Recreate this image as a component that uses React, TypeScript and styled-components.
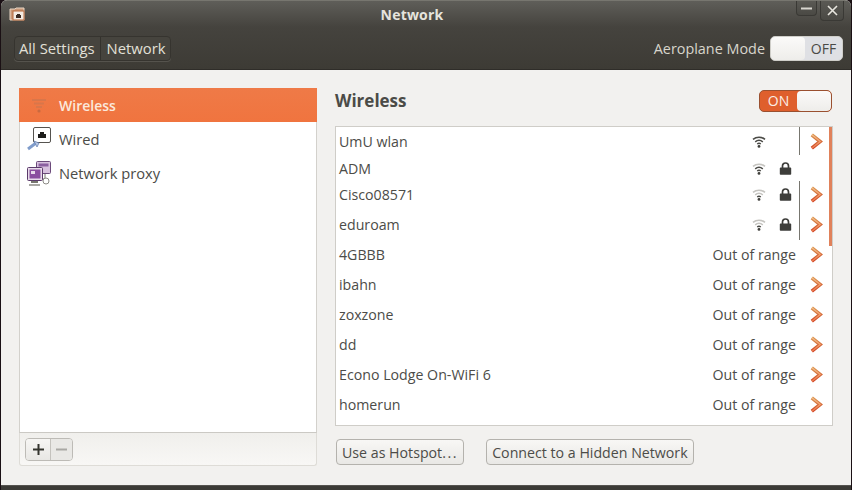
import React from "react";
import styled, { createGlobalStyle } from "styled-components";

const Global = createGlobalStyle`
  html, body { margin: 0; padding: 0; width: 852px; height: 490px; overflow: hidden; background: #1a1014; }
  * { box-sizing: border-box; }
  body { font-family: "Open Sans", "Noto Sans", sans-serif; }
`;

const Win = styled.div`
  width: 850px; height: 490px; margin-left: 1px; display: flex; flex-direction: column;
  border-radius: 6px 6px 0 0; overflow: hidden; background: #f2f1ef;
`;
const TitleBar = styled.div`
  height: 27px; flex: none; position: relative; display: flex; align-items: center; justify-content: center;
  padding-right: 28px;
  background: linear-gradient(#5f5e59, #45433e);
  border-top: 1px solid #77766f;
`;
const TitleText = styled.div`
  color: #e6e4dd; font-size: 14px; font-weight: 700; letter-spacing: .2px; margin-top: 1px;
`;
const AppIcon = styled.svg`
  position: absolute; left: 8px; top: 5px;
`;
const WinBtn = styled.div<{ $right: number; $w: number; $h: number }>`
  position: absolute; right: ${p => p.$right}px; top: 0; width: ${p => p.$w}px; height: ${p => p.$h}px;
  display: flex; align-items: center; justify-content: center;
  border: 1px solid #3a3935; border-top: none; border-radius: 0 0 4px 4px;
  background: linear-gradient(#5a5954, #4a4944);
`;
const ToolBar = styled.div`
  height: 43px; flex: none; display: flex; align-items: center; justify-content: space-between;
  padding: 0 8px 0 13px;
  background: linear-gradient(#45433e, #3d3b35);
  border-bottom: 1px solid #2f2d29;
`;
const Crumbs = styled.div`
  display: flex; height: 25px; border: 1px solid #36342f; border-radius: 4px; overflow: hidden;
  background: #46443e; box-shadow: 0 1px 0 #55534d;
`;
const Crumb = styled.div`
  display: flex; align-items: center; padding: 0 5px 0 4px; color: #e2e0d8; font-size: 14.8px;
  & + & { border-left: 1px solid #34322d; padding: 0 5px 0 6px; }
`;
const AeroWrap = styled.div`
  display: flex; align-items: center; gap: 5px; color: #d8d5cc; font-size: 14.4px;
`;
const Toggle = styled.div<{ $on?: boolean }>`
  width: 73px; height: ${p => (p.$on ? 22 : 25)}px; border-radius: 5px; display: flex; align-items: stretch; overflow: hidden;
  flex-direction: ${p => (p.$on ? "row" : "row-reverse")};
  font-size: 14px;
  margin-right: ${p => (p.$on ? 1 : 0)}px;
  background: ${p => (p.$on ? "#df5f2d" : "#dfe0e4")};
  border: 1px solid ${p => (p.$on ? "#9a5030" : "#cfcec9")};
  color: ${p => (p.$on ? "#fbeee6" : "#4a4a46")};
`;
const ToggleLabel = styled.div`
  flex: 1; display: flex; align-items: center; justify-content: center;
`;
const Knob = styled.div`
  width: 34px; background: linear-gradient(#fbfaf9, #eeedea); border-radius: 4px;
`;
const Body = styled.div`
  flex: 1; display: flex; padding: 18px 0 0 18px; gap: 18px; background: #f2f1ef;
`;
const Left = styled.div`
  width: 298px; height: 378px; display: flex; flex-direction: column;
`;
const SideList = styled.div`
  height: 345px; flex: none; background: #fff; border: 1px solid #d3d1cc; border-top: none; border-bottom-color: #cbc9c4;
`;
const SideRow = styled.div<{ $sel?: boolean }>`
  height: 34px; display: flex; align-items: center; padding-left: ${p => (p.$sel ? 6 : 5)}px; gap: 7px;
  font-size: ${p => (p.$sel ? 14 : 14.7)}px;
  margin: 0 ${p => (p.$sel ? "-1px" : "0")};
  color: ${p => (p.$sel ? "#fbe9dc" : "#4c4c48")};
  font-weight: ${p => (p.$sel ? 600 : 400)};
  background: ${p => (p.$sel ? "linear-gradient(#ef7a47, #f0743f)" : "transparent")};
`;
const IconBox = styled.div`
  width: 27px; height: 27px; flex: none; display: flex; align-items: center; justify-content: center;
`;
const SideFoot = styled.div`
  flex: 1; display: flex; align-items: center; padding-left: 5px;
  border: 1px solid #dedcd7; border-top: none; border-radius: 0 0 3px 3px;
  background: linear-gradient(#f0efec, #f8f7f5);
`;
const AddRemove = styled.div`
  display: flex; width: 48px; height: 23px; border: 1px solid #bdbbb6; border-radius: 4px; overflow: hidden;
`;
const MiniBtn = styled.div<{ $off?: boolean }>`
  flex: ${p => (p.$off ? 1 : "none")}; width: ${p => (p.$off ? "auto" : "24px")};
  display: flex; align-items: center; justify-content: center;
  background: ${p => (p.$off ? "#e9e8e5" : "linear-gradient(#f7f6f4, #e8e7e4)")};
  & + & { border-left: 1px solid #c4c2bd; }
`;
const Right = styled.div`
  width: 498px; display: flex; flex-direction: column;
`;
const Head = styled.div`
  height: 38px; flex: none; display: flex; align-items: center; justify-content: space-between;
  padding: 2px 0 15px;
`;
const H2 = styled.div`
  font-size: 17px; font-weight: 700; color: #4b4b47; margin-top: -1px;
`;
const NetList = styled.div`
  position: relative; height: 300px; flex: none; background: #fff; border: 1px solid #cfcdc8;
`;
const Scroll = styled.div`
  position: absolute; right: 0; top: 0; width: 3px; height: 119px; background: #e0815a;
`;
const Row = styled.div<{ $h: number }>`
  height: ${p => p.$h}px; display: flex; align-items: center; padding-left: 3px; font-size: 14.2px; color: #4c4c48;
`;
const Name = styled.div`
  flex: 1; white-space: nowrap;
`;
const Status = styled.div`
  width: 47px; display: flex; align-items: center; gap: 13px;
`;
const Range = styled.div`
  width: 90px; text-align: right; padding-right: 3px; color: #4c4c48; white-space: nowrap;
`;
const ArrowCell = styled.div<{ $sep?: boolean }>`
  width: 33px; align-self: stretch; flex: none; display: flex; align-items: center; padding-left: 10px;
  border-left: 1px solid ${p => (p.$sep ? "#77766f" : "transparent")};
`;
const Actions = styled.div`
  display: flex; gap: 22px; margin: 13px 0 0 1px;
`;
const Btn = styled.div`
  height: 26px; padding: 0 5px; display: flex; align-items: center; font-size: 14.2px; color: #4c4c48;
  border: 1px solid #b4b2ad; border-radius: 4px;
  background: linear-gradient(#f8f7f5, #e9e8e5);
`;
const Dots = styled.span`
  letter-spacing: 1.6px;
`;
const Bottom = styled.div`
  height: 5px; flex: none; background: #3b3a36; border-top: 1px solid #55534f;
`;

const Chevron = () => (
  <svg width="13" height="17" viewBox="0 0 13 17">
    <defs>
      <linearGradient id="chev" x1="0" y1="0" x2="0" y2="1">
        <stop offset="0" stopColor="#d9924f" />
        <stop offset="1" stopColor="#cf4526" />
      </linearGradient>
      <linearGradient id="chevIn" x1="0" y1="0" x2="0" y2="1">
        <stop offset="0" stopColor="#f3c08a" />
        <stop offset="1" stopColor="#ee7a4e" />
      </linearGradient>
    </defs>
    <path d="M1.8 1.8 L10.2 8.5 L1.8 15.2" fill="none" stroke="url(#chev)" strokeWidth="3.6" />
    <path d="M1.8 1.8 L10.2 8.5 L1.8 15.2" fill="none" stroke="url(#chevIn)" strokeWidth="1.4" />
  </svg>
);

const Wifi = ({ level }: { level: number }) => {
  const c = (n: number) => (level >= n ? "#4a4a46" : "#c5c4c0");
  return (
    <svg width="14" height="13" viewBox="0 0 14 13" style={{ flex: "none" }}>
      <path d="M1 4.4 C4.4 1.4 9.6 1.4 13 4.4" fill="none" stroke={c(3)} strokeWidth="1.5" />
      <path d="M3.2 6.8 C5.4 5 8.6 5 10.8 6.8" fill="none" stroke={c(2)} strokeWidth="1.5" />
      <path d="M5.2 9 C6.3 8.2 7.7 8.2 8.8 9" fill="none" stroke={c(1)} strokeWidth="1.5" />
      <circle cx="7" cy="11.4" r="1.4" fill="#3f3f3b" />
    </svg>
  );
};

const Lock = () => (
  <svg width="13" height="13" viewBox="0 0 13 13" style={{ flex: "none" }}>
    <path d="M3.5 6 V4 a3 3 0 0 1 6 0 V6" fill="none" stroke="#3d3d3a" strokeWidth="1.7" />
    <rect x="0.8" y="5.6" width="11.4" height="7.2" rx="0.8" fill="#3d3d3a" />
  </svg>
);

const SelWifi = () => (
  <svg width="18" height="18" viewBox="0 0 18 18">
    <g fill="none" stroke="#d9764a" strokeWidth="2">
      <path d="M2 4 H16" /><path d="M4 7.5 H14" /><path d="M6 11 H12" />
    </g>
    <circle cx="9" cy="15" r="1.6" fill="#c96a40" />
  </svg>
);

const WiredIcon = () => (
  <svg width="26" height="26" viewBox="0 0 26 26">
    <rect x="7.5" y="1.5" width="17" height="15" rx="1.5" fill="#fff" stroke="#55534f" />
    <path d="M12 12 V8 H14 V6 H18 V8 H20 V12 Z" fill="#1d1d1b" />
    <path d="M2 23 L10 17" stroke="#7f9ccb" strokeWidth="3" />
    <path d="M8 15 L13 17 L11 21 Z" fill="#b9c8e2" stroke="#5b78ad" strokeWidth=".7" />
  </svg>
);

const ProxyIcon = () => (
  <svg width="26" height="27" viewBox="0 0 26 27">
    <rect x="10.5" y="1.5" width="14" height="12" rx="1" fill="#d7c1de" stroke="#6b4a7a" />
    <rect x="12.5" y="3.5" width="10" height="3" fill="#8b5fa0" />
    <path d="M19 14 V19 H14" fill="none" stroke="#77766f" />
    <rect x="1.5" y="7.5" width="15" height="13" rx="1" fill="#e8dcea" stroke="#5b3a6b" />
    <rect x="3.5" y="9.5" width="11" height="9" fill="#8a4f9f" />
    <rect x="5" y="11" width="4" height="3" fill="#e8dcea" />
    <rect x="5" y="21" width="7" height="2" fill="#77766f" />
    <path d="M3 25 H14" stroke="#8b8a85" strokeWidth="1.5" />
    <circle cx="20" cy="21" r="3" fill="#fff" stroke="#8b8a85" />
  </svg>
);

type Net = { name: string; h: number; wifi?: number; lock?: boolean; sep?: boolean; arrow?: boolean };
const nets: Net[] = [
  { name: "UmU wlan", h: 28, wifi: 3, sep: true, arrow: true },
  { name: "ADM", h: 26, wifi: 2, lock: true },
  { name: "Cisco08571", h: 27, wifi: 1, lock: true, sep: true, arrow: true },
  { name: "eduroam", h: 32, wifi: 1, lock: true, sep: true, arrow: true },
  { name: "4GBBB", h: 29, arrow: true },
  { name: "ibahn", h: 30, arrow: true },
  { name: "zoxzone", h: 30, arrow: true },
  { name: "dd", h: 30, arrow: true },
  { name: "Econo Lodge On-WiFi 6", h: 30, arrow: true },
  { name: "homerun", h: 30, arrow: true },
];

export default function App() {
  return (
    <Win>
      <Global />
      <TitleBar>
        <AppIcon width="17" height="16" viewBox="0 0 17 16">
          <path d="M1 3 H6 L7 2 H15 V14 H1 Z" fill="#c99878" stroke="#e8d6c4" />
          <rect x="4" y="5" width="11" height="9" fill="#f3ece4" stroke="#b8693b" />
          <path d="M7 12 V9 H8 V8 H11 V9 H12 V12 Z" fill="#3a2a22" />
        </AppIcon>
        <TitleText>Network</TitleText>
        <WinBtn $right={34} $w={21} $h={15}>
          <svg width="11" height="3" viewBox="0 0 11 3"><path d="M0 1.5 H11" stroke="#d8d6cf" strokeWidth="2" /></svg>
        </WinBtn>
        <WinBtn $right={7} $w={24} $h={20}>
          <svg width="11" height="11" viewBox="0 0 11 11"><path d="M1 1 L10 10 M10 1 L1 10" stroke="#e8e6df" strokeWidth="1.6" /></svg>
        </WinBtn>
      </TitleBar>
      <ToolBar>
        <Crumbs>
          <Crumb>All Settings</Crumb>
          <Crumb>Network</Crumb>
        </Crumbs>
        <AeroWrap>
          Aeroplane Mode
          <Toggle>
            <ToggleLabel>OFF</ToggleLabel>
            <Knob />
          </Toggle>
        </AeroWrap>
      </ToolBar>
      <Body>
        <Left>
          <SideList>
            <SideRow $sel><IconBox><SelWifi /></IconBox>Wireless</SideRow>
            <SideRow><IconBox><WiredIcon /></IconBox>Wired</SideRow>
            <SideRow><IconBox><ProxyIcon /></IconBox>Network proxy</SideRow>
          </SideList>
          <SideFoot>
            <AddRemove>
              <MiniBtn>
                <svg width="11" height="11" viewBox="0 0 11 11"><path d="M5.5 0 V11 M0 5.5 H11" stroke="#35352f" strokeWidth="2" /></svg>
              </MiniBtn>
              <MiniBtn $off>
                <svg width="11" height="3" viewBox="0 0 11 3"><path d="M0 1.5 H11" stroke="#a9a8a4" strokeWidth="2" /></svg>
              </MiniBtn>
            </AddRemove>
          </SideFoot>
        </Left>
        <Right>
          <Head>
            <H2>Wireless</H2>
            <Toggle $on>
              <ToggleLabel>ON</ToggleLabel>
              <Knob />
            </Toggle>
          </Head>
          <NetList>
            <Scroll />
            {nets.map(n => (
              <Row key={n.name} $h={n.h}>
                <Name>{n.name}</Name>
                {n.wifi ? (
                  <Status>
                    <Wifi level={n.wifi} />
                    {n.lock && <Lock />}
                  </Status>
                ) : (
                  <Range>Out of range</Range>
                )}
                <ArrowCell $sep={n.sep}>{n.arrow && <Chevron />}</ArrowCell>
              </Row>
            ))}
          </NetList>
          <Actions>
            <Btn>Use as Hotspot<Dots>...</Dots></Btn>
            <Btn>Connect to a Hidden Network</Btn>
          </Actions>
        </Right>
      </Body>
      <Bottom />
    </Win>
  );
}
